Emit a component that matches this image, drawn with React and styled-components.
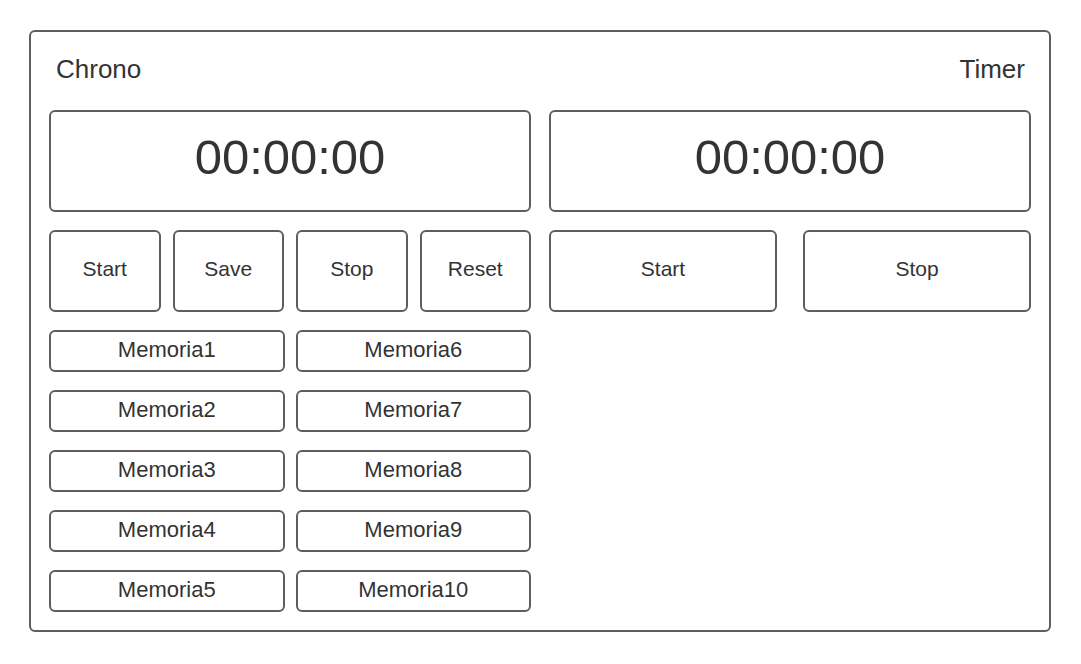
import React from "react";
import styled, { createGlobalStyle } from "styled-components";

const Global = createGlobalStyle`
  html, body {
    margin: 0;
    background: #ffffff;
  }
  body {
    font-family: "Liberation Sans", Arial, sans-serif;
    color: #333333;
  }
`;

const Frame = styled.div`
  box-sizing: border-box;
  width: 1022px;
  height: 602px;
  margin: 30px 0 0 29px;
  padding: 18px;
  border: 2px solid #5e5e5e;
  border-radius: 6px;
  display: flex;
  flex-direction: column;
  gap: 18px;
`;

const Header = styled.div`
  box-sizing: border-box;
  height: 42px;
  display: flex;
  align-items: center;
  justify-content: space-between;
  padding: 0 6px 4px 7px;
  font-size: 26px;
`;

const Columns = styled.div`
  display: grid;
  grid-template-columns: 1fr 1fr;
  gap: 18px;
  align-items: start;
`;

const Column = styled.div`
  display: flex;
  flex-direction: column;
  gap: 18px;
`;

const Box = styled.div`
  box-sizing: border-box;
  border: 2px solid #5e5e5e;
  border-radius: 6px;
  display: flex;
  align-items: center;
  justify-content: center;
  background: #fff;
`;

const Display = styled(Box)`
  height: 102px;
  font-size: 49px;
  padding-bottom: 8px;
`;

const ButtonRow = styled.div`
  display: grid;
  grid-template-columns: repeat(${p => p.cols}, 1fr);
  gap: ${p => p.gap}px;
`;

const Button = styled(Box)`
  height: 82px;
  font-size: 21px;
  padding-bottom: 5px;
`;

const MemoryGrid = styled.div`
  display: grid;
  grid-template-columns: 1fr 1fr;
  grid-auto-flow: column;
  grid-template-rows: repeat(5, 42px);
  column-gap: 11px;
  row-gap: 18px;
`;

const Memory = styled(Box)`
  font-size: 22px;
  padding-bottom: 3px;
`;

const memories = Array.from({ length: 10 }, (_, i) => `Memoria${i + 1}`);

export default function App() {
  return (
    <>
      <Global />
      <Frame>
        <Header>
          <span>Chrono</span>
          <span>Timer</span>
        </Header>
        <Columns>
          <Column>
            <Display>00:00:00</Display>
            <ButtonRow cols={4} gap={12}>
              <Button>Start</Button>
              <Button>Save</Button>
              <Button>Stop</Button>
              <Button>Reset</Button>
            </ButtonRow>
            <MemoryGrid>
              {memories.map(m => (
                <Memory key={m}>{m}</Memory>
              ))}
            </MemoryGrid>
          </Column>
          <Column>
            <Display>00:00:00</Display>
            <ButtonRow cols={2} gap={26}>
              <Button>Start</Button>
              <Button>Stop</Button>
            </ButtonRow>
          </Column>
        </Columns>
      </Frame>
    </>
  );
}
